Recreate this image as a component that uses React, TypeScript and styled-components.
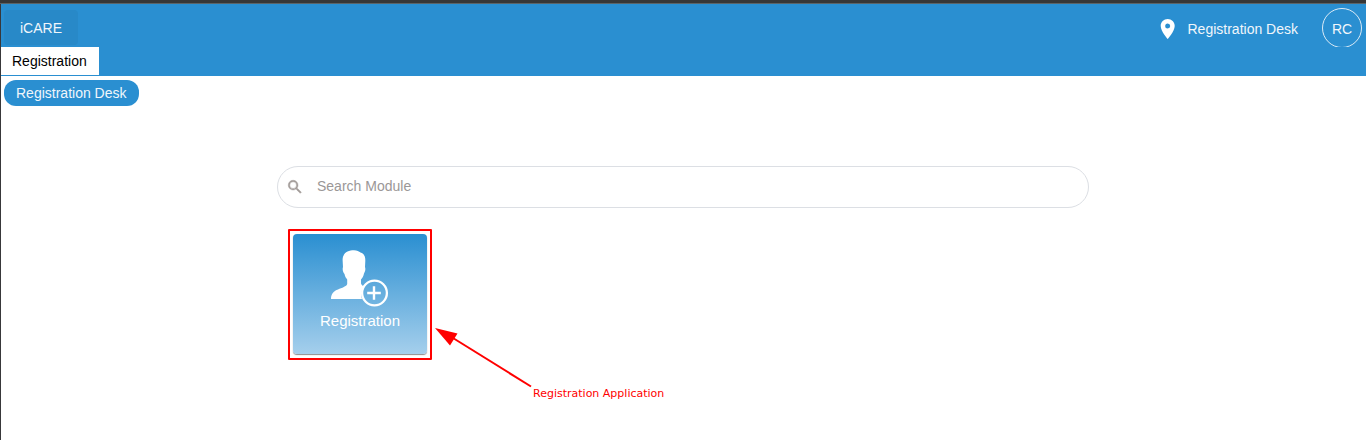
import React from "react";
import styled, { createGlobalStyle } from "styled-components";

const blue = "#2a8fd1";

const GlobalStyle = createGlobalStyle`
  *, *::before, *::after { box-sizing: border-box; }
  body {
    margin: 0;
    background: #fff;
    font-family: "Liberation Sans", Arial, sans-serif;
    font-size: 14px;
    overflow: hidden;
  }
`;

const Page = styled.div`
  position: relative;
  height: 440px;
  display: flex;
  flex-direction: column;
  border-left: 1px solid #38383a;
`;

const WindowEdge = styled.div`
  height: 4px;
  margin-left: -1px;
  flex: none;
  background: #373737;
  border-bottom: 1px solid #5b6468;
`;

const TopBar = styled.header`
  height: 43px;
  flex: none;
  display: flex;
  align-items: flex-start;
  padding: 4px 4px 0 3px;
  background: ${blue};
  color: #f0f6fb;
  overflow: hidden;
`;

const Brand = styled.button`
  width: 74px;
  height: 35px;
  margin: 2px auto 0 0;
  padding: 0;
  border: 0;
  border-radius: 4px;
  background: #2889c8;
  color: inherit;
  font: inherit;
  line-height: 36px;
`;

const Location = styled.div`
  display: flex;
  align-items: center;
  height: 41px;
  margin-right: 24px;
  line-height: 16px;
`;

const PinIcon = styled.svg`
  width: 24px;
  height: 24px;
  margin-right: 8px;
  fill: #fff;
`;

const Avatar = styled.div`
  width: 40px;
  height: 40px;
  flex: none;
  border: 1px solid #dcebf6;
  border-radius: 50%;
  text-align: center;
  line-height: 40px;
`;

const TabBar = styled.nav`
  height: 29px;
  flex: none;
  background: ${blue};
`;

const Tab = styled.div`
  width: 98px;
  height: 28px;
  padding-left: 11px;
  background: #fff;
  color: #000;
  line-height: 28px;
`;

const DeskRow = styled.div`
  padding: 4px 3px 0;
  height: 30px;
  flex: none;
`;

const DeskChip = styled.div`
  width: 135px;
  height: 26px;
  padding-left: 12px;
  border-radius: 12px;
  background: ${blue};
  color: #f0f6fb;
  line-height: 26px;
`;

const Main = styled.main`
  width: 812px;
  margin: 60px 0 0 276px;
`;

const SearchField = styled.label`
  display: flex;
  align-items: center;
  height: 42px;
  padding-left: 8px;
  border: 1px solid #dcdfe4;
  border-radius: 21px;
`;

const SearchIcon = styled.svg`
  width: 18px;
  height: 18px;
  margin-right: 13px;
  fill: #a19a97;
  stroke: #a19a97;
  stroke-width: 0.6;
`;

const SearchInput = styled.input`
  flex: 1;
  height: 20px;
  margin: 0 20px 2px 0;
  padding: 0;
  border: 0;
  outline: 0;
  background: transparent;
  font: inherit;
  &::placeholder { color: #9b9797; opacity: 1; }
`;

const Highlight = styled.div`
  width: 144px;
  height: 131px;
  margin: 21px 0 0 11px;
  padding: 3px;
  border: 2px solid #f00;
  border-radius: 1px;
`;

const ModuleCard = styled.div`
  width: 134px;
  height: 120px;
  display: flex;
  flex-direction: column;
  align-items: center;
  border-radius: 4px;
  background: linear-gradient(${blue}, #a5cfec);
  box-shadow: 0 1px 1px rgba(0, 0, 0, 0.45);
  color: #fff;
  font-size: 15px;
  line-height: 18px;
`;

const PatientIcon = styled.svg`
  width: 60px;
  height: 60px;
  margin: 15px 0 3px;
`;

const Arrow = styled.svg`
  position: absolute;
  left: 429px;
  top: 322px;
  width: 110px;
  height: 70px;
`;

const Annotation = styled.div`
  position: absolute;
  left: 532px;
  top: 387px;
  color: #f00;
  font: 11px/14px "DejaVu Sans", sans-serif;
  white-space: nowrap;
`;

export default function App() {
  return (
    <>
      <GlobalStyle />
      <Page>
        <WindowEdge />
        <TopBar>
          <Brand>iCARE</Brand>
          <Location>
            <PinIcon viewBox="0.3 0 24 24">
              <path d="M12 2C8.13 2 5 5.13 5 9c0 5.25 7 13 7 13s7-7.75 7-13c0-3.87-3.13-7-7-7zm0 9.5a2.5 2.5 0 1 1 0-5 2.5 2.5 0 0 1 0 5z" />
            </PinIcon>
            Registration Desk
          </Location>
          <Avatar>RC</Avatar>
        </TopBar>
        <TabBar>
          <Tab>Registration</Tab>
        </TabBar>
        <DeskRow>
          <DeskChip>Registration Desk</DeskChip>
        </DeskRow>
        <Main>
          <SearchField>
            <SearchIcon viewBox="0 0 24 24">
              <path d="M15.5 14h-.79l-.28-.27A6.47 6.47 0 0 0 16 9.5 6.5 6.5 0 1 0 9.5 16c1.61 0 3.09-.59 4.23-1.57l.27.28v.79l5 4.99L20.49 19l-4.99-5zm-6 0a4.5 4.5 0 1 1 0-9 4.5 4.5 0 0 1 0 9z" />
            </SearchIcon>
            <SearchInput placeholder="Search Module" />
          </SearchField>
          <Highlight>
            <ModuleCard>
              <PatientIcon viewBox="0 0 60 60">
                <path
                  fill="#fff"
                  d="M12.600 11C12.600 4 18 1.300 24 1.300C27 1.300 29 2.300 30.500 3.600C34 4.500 35.500 7.500 35.300 12L35 18C35.700 20 35.300 22.500 34 24.500C33.500 27.500 32 29.500 31 30.500V34.500C31.500 36 32.500 36.800 34 37.500A13.200 13.200 0 0 0 32 50H1C1 44.500 4 42 8 40.500C12 38.700 16.500 37.500 17.200 35V30.500C16 29 15 27.500 14.500 25C13 23.500 12.200 20.500 13 18Z"
                />
                <circle cx="44.500" cy="44" r="12.400" fill="none" stroke="#fff" strokeWidth="2.300" />
                <path d="M44 37.200v13.600M37.200 44h13.600" fill="none" stroke="#fff" strokeWidth="2.400" />
              </PatientIcon>
              Registration
            </ModuleCard>
          </Highlight>
        </Main>
        <Arrow viewBox="0 0 110 70">
          <path d="M23 16L101 64.500" stroke="#f00" strokeWidth="2" fill="none" />
          <path d="M5 6L27.500 11.500L20 23.500Z" fill="#f00" />
        </Arrow>
        <Annotation>Registration Application</Annotation>
      </Page>
    </>
  );
}
